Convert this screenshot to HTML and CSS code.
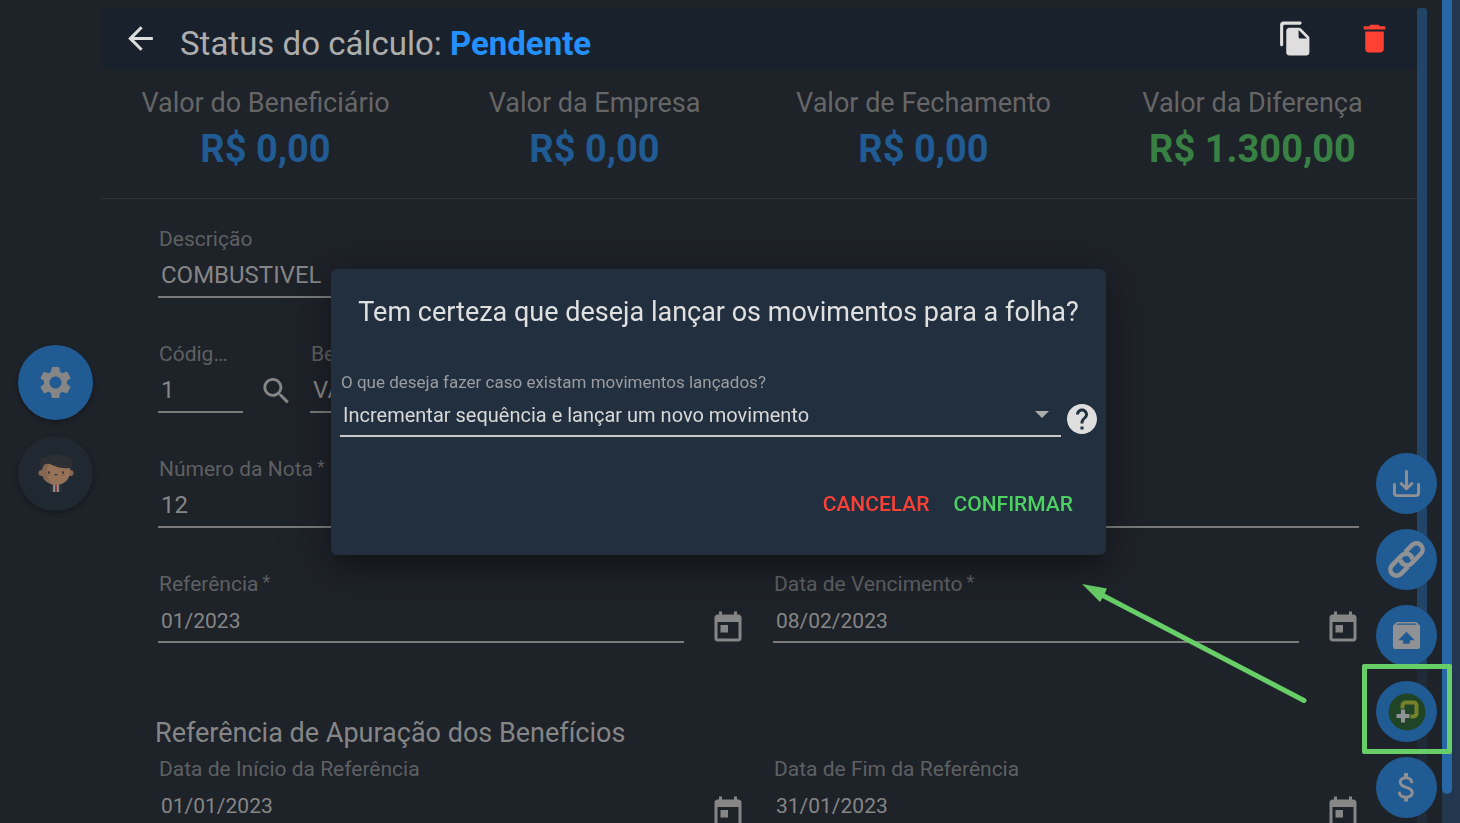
FILE: index.html
```html
<!DOCTYPE html>
<html lang="pt-BR">
<head>
<meta charset="utf-8">
<title>Status do cálculo</title>
<link rel="stylesheet" href="styles.css">
</head>
<body>
<svg class="defs" aria-hidden="true">
  <symbol id="calendar" viewBox="0 0 24 24"><path d="M19 3h-1V1h-2v2H8V1H6v2H5c-1.100 0-2 .9-2 2v14c0 1.100.9 2 2 2h14c1.100 0 2-.9 2-2V5c0-1.100-.9-2-2-2zm0 16H5V8h14v11zM7 10h5v5H7z"/></symbol>
</svg>
<div class="app">
  <nav class="side">
    <button class="side-btn side-btn-blue" aria-label="Configurações">
      <svg class="icon-gear" viewBox="0 0 24 24"><path d="M19.430 12.980c.04-.32.07-.64.07-.98s-.03-.66-.07-.98l2.110-1.650c.19-.15.24-.42.12-.64l-2-3.460c-.12-.22-.39-.3-.61-.22l-2.490 1c-.52-.4-1.080-.73-1.690-.98l-.38-2.650C14.460 2.180 14.250 2 14 2h-4c-.25 0-.46.180-.49.420l-.38 2.650c-.61.250-1.170.590-1.690.980l-2.490-1c-.23-.09-.49 0-.61.220l-2 3.460c-.13.220-.07.490.120.640l2.110 1.650c-.04.320-.07.650-.07.980s.030.660.070.980l-2.110 1.650c-.19.150-.24.420-.12.640l2 3.460c.120.220.390.300.610.220l2.490-1c.520.400 1.080.730 1.690.980l.38 2.650c.03.240.24.420.49.420h4c.25 0 .46-.18.49-.42l.38-2.650c.61-.25 1.170-.59 1.690-.98l2.490 1c.23.090.49 0 .61-.22l2-3.460c.12-.22.070-.49-.12-.64l-2.110-1.650zM12 15.900c-2.150 0-3.900-1.750-3.900-3.900s1.750-3.900 3.900-3.900 3.900 1.750 3.900 3.900-1.750 3.900-3.900 3.900z"/></svg>
    </button>
    <button class="side-btn" aria-label="Perfil">
      <svg class="icon-face" viewBox="0 0 36 40">
        <path fill="#2d2f34" d="M2 17V9c0-4 3-5 6-5 3-3 12-4 18-1 6 0 9 3 8 7v8H2z"/>
        <path fill="#8b8b8b" d="M15 29h6v10h-6z"/><path fill="#8a4040" d="M17 31h2v8h-2z"/>
        <path fill="#2a3038" d="M12 33l3-2v8h-3zM24 33l-3-2v8h3z"/>
        <circle cx="3.500" cy="20" r="3" fill="#856650"/><circle cx="32.500" cy="20" r="3" fill="#856650"/>
        <path fill="#957258" d="M5 14c1-3 4-4 7-3 5 2 9 5 20 4v4c0 7-6 13-14 13S4 26 4 19z"/>
        <path fill="#856650" d="M5 14c1-2 3-3 6-3-3 6-3 14 3 20C8 30 4 25 4 19z"/>
        <g fill="#30343a"><ellipse cx="11" cy="19.500" rx=".9" ry="1.500"/><ellipse cx="25" cy="19.500" rx=".9" ry="1.500"/><path d="M16.500 21h3c0 2-3 2-3 0z"/></g>
        <g fill="#936045"><ellipse cx="11" cy="22.500" rx="2" ry=".6"/><ellipse cx="25" cy="22.500" rx="2" ry=".6"/></g>
      </svg>
    </button>
  </nav>

  <main class="panel">
    <header class="bar">
      <button class="bar-btn" aria-label="Voltar"><svg class="icon-back" viewBox="0 0 24 24"><path d="M20 11H7.830l5.590-5.590L12 4l-8 8 8 8 1.410-1.410L7.830 13H20v-2z"/></svg></button>
      <h1 class="bar-title">Status do cálculo: <strong class="status">Pendente</strong></h1>
      <button class="bar-btn" aria-label="Copiar"><svg class="icon-copy" viewBox="0 0 24 24"><path d="M15 1H4c-1.100 0-2 .9-2 2v13c0 .55.45 1 1 1s1-.45 1-1V4c0-.55.45-1 1-1h10c.55 0 1-.45 1-1s-.45-1-1-1zm.590 4.590l4.830 4.830c.37.370.58.880.58 1.410V21c0 1.100-.9 2-2 2H7.990C6.890 23 6 22.100 6 21l.010-14c0-1.100.89-2 1.990-2h6.170c.53 0 1.040.210 1.420.590zM15 12h4.500L14 6.500V11c0 .55.45 1 1 1z"/></svg></button>
      <button class="bar-btn" aria-label="Excluir"><svg class="icon-trash" viewBox="0 0 24 24"><path d="M6 19c0 1.100.9 2 2 2h8c1.100 0 2-.9 2-2V7.500H6V19zM19 4h-3.500l-1-1h-5l-1 1H5v2.200h14V4z"/></svg></button>
    </header>

    <section class="totals">
      <div class="total"><span class="total-name">Valor do Beneficiário</span><strong class="total-value">R$ 0,00</strong></div>
      <div class="total"><span class="total-name">Valor da Empresa</span><strong class="total-value">R$ 0,00</strong></div>
      <div class="total"><span class="total-name">Valor de Fechamento</span><strong class="total-value">R$ 0,00</strong></div>
      <div class="total"><span class="total-name">Valor da Diferença</span><strong class="total-value total-green">R$ 1.300,00</strong></div>
    </section>

    <form class="form">
      <div class="row row-narrow">
        <div class="field"><label for="desc">Descrição</label><input id="desc" class="large" value="COMBUSTIVEL"></div>
      </div>
      <div class="row row-code">
        <div class="field"><label for="cod" class="short">Código do Benefício</label><input id="cod" class="large" value="1"></div>
        <button type="button" class="icon-btn" aria-label="Pesquisar"><svg viewBox="0 0 24 24"><path d="M15.500 14h-.79l-.28-.27C15.410 12.590 16 11.110 16 9.500 16 5.910 13.090 3 9.500 3S3 5.910 3 9.500 5.910 16 9.500 16c1.610 0 3.090-.59 4.230-1.570l.27.280v.79l5 4.990L20.490 19l-4.990-5zm-6 0C7.010 14 5 11.990 5 9.500S7.010 5 9.500 5 14 7.010 14 9.500 11.990 14 9.500 14z"/></svg></button>
        <div class="field"><label for="ben">Benefício</label><input id="ben" class="large" value="VALE COMBUSTIVEL"></div>
      </div>
      <div class="row row-wide">
        <div class="field"><label for="nota">Número da Nota<sup>*</sup></label><input id="nota" class="large" value="12"></div>
      </div>
      <div class="row row-dates">
        <div class="date"><div class="field"><label for="ref">Referência<sup>*</sup></label><input id="ref" value="01/2023"></div>
          <button type="button" class="icon-btn" aria-label="Abrir calendário"><svg><use href="#calendar"/></svg></button></div>
        <div class="date"><div class="field"><label for="venc">Data de Vencimento<sup>*</sup></label><input id="venc" value="08/02/2023"></div>
          <button type="button" class="icon-btn" aria-label="Abrir calendário"><svg><use href="#calendar"/></svg></button></div>
      </div>
      <h2 class="section-title">Referência de Apuração dos Benefícios</h2>
      <div class="row row-dates">
        <div class="date"><div class="field"><label for="ini">Data de Início da Referência</label><input id="ini" value="01/01/2023"></div>
          <button type="button" class="icon-btn" aria-label="Abrir calendário"><svg><use href="#calendar"/></svg></button></div>
        <div class="date"><div class="field"><label for="fim">Data de Fim da Referência</label><input id="fim" value="31/01/2023"></div>
          <button type="button" class="icon-btn" aria-label="Abrir calendário"><svg><use href="#calendar"/></svg></button></div>
      </div>
    </form>
  </main>
  <div class="scroll scroll-inner"><div class="thumb"></div></div>
  <div class="scroll scroll-outer"><div class="thumb"></div></div>
</div>

<div class="fabs">
  <button class="fab" aria-label="Baixar"><svg class="outline" viewBox="0 0 30 30"><path d="M2.500 16v8.500q0 3 3 3h19q3 0 3-3V16M15 2.500V20M9.500 15l5.500 5.500L20.500 15"/></svg></button>
  <button class="fab" aria-label="Vincular"><svg class="icon-link" viewBox="0 0 37 37"><g transform="rotate(-45 18.500 18.500)" fill="none" stroke="currentColor" stroke-width="4.600"><path d="M14.500 24.700H4.500A6.200 6.200 0 0 1 4.500 12.300H18A6.200 6.200 0 0 1 22.500 22.800"/><path d="M22.500 12.300H32.500A6.200 6.200 0 0 1 32.500 24.700H19A6.200 6.200 0 0 1 14.500 14.200"/></g></svg></button>
  <button class="fab" aria-label="Desarquivar"><svg viewBox="0 0 30 30"><path fill-rule="evenodd" d="M5 1h20l4 4v21q0 3-3 3H4q-3 0-3-3V5zM5.500 2.500L4.500 4h21l-1-1.500zM15 11l-8.500 9h5v3.500h7V20h5z"/></svg></button>
  <div class="highlight"><button class="fab" aria-label="Lançar na folha"><svg class="icon-launch" viewBox="0 0 38 38"><circle cx="19" cy="19" r="18.500" fill="#204426"/><rect x="14.500" y="9.500" width="14" height="14" rx="3" fill="none" stroke="#77802b" stroke-width="4"/><path fill="#8f9194" stroke="#204426" stroke-width="1" d="M12.500 16h5v4.500H22v5h-4.500V30h-5v-4.500H8v-5h4.500z"/></svg></button></div>
  <button class="fab" aria-label="Valores"><svg class="outline outline-square" viewBox="0 0 30 30"><path d="M20.500 10.500c0-3.500-2-5.500-6-5.500s-6 2-6 4.500c0 6.500 12.500 4 12.500 10.500 0 3.500-2.500 5-6.500 5s-7-2-7-5.500"/><path d="M14.500 0v5M14.500 25v4.500" stroke-width="4"/></svg></button>
</div>

<svg class="arrow" viewBox="0 0 228 124" aria-hidden="true"><path d="M222 116.500L20 11" fill="none" stroke="#68ce68" stroke-width="5" stroke-linecap="round"/><path d="M0 0l25 4.500-2.500 5.500-4 7.500L17.500 17.500z" fill="#68ce68"/></svg>

<div class="overlay">
  <section class="dialog" role="dialog" aria-modal="true" aria-labelledby="dlg">
    <h2 class="dialog-title" id="dlg">Tem certeza que deseja lançar os movimentos para a folha?</h2>
    <div class="choice">
      <div class="choice-field">
        <label for="acao">O que deseja fazer caso existam movimentos lançados?</label>
        <div class="select-box">
          <select id="acao"><option>Incrementar sequência e lançar um novo movimento</option></select>
          <svg class="caret" viewBox="0 0 14 7"><path d="M0 0h14L7 7z"/></svg>
        </div>
      </div>
      <button class="help" aria-label="Ajuda"><svg viewBox="0 0 24 24"><path d="M12 2C6.480 2 2 6.480 2 12s4.480 10 10 10 10-4.480 10-10S17.520 2 12 2zm1 17h-2v-2h2v2zm2.070-7.750l-.9.920C13.450 12.900 13 13.500 13 15h-2v-.5c0-1.100.45-2.100 1.170-2.830l1.240-1.260c.37-.36.59-.86.59-1.410 0-1.100-.9-2-2-2s-2 .9-2 2H8c0-2.210 1.790-4 4-4s4 1.790 4 4c0 .88-.36 1.680-.93 2.250z"/></svg></button>
    </div>
    <div class="actions">
      <button class="action cancel">CANCELAR</button>
      <button class="action confirm">CONFIRMAR</button>
    </div>
  </section>
</div>
</body>
</html>
```
FILE: styles.css
```css
* { box-sizing: border-box; }
body {
  margin: 0;
  height: 100vh;
  overflow: hidden;
  background: #1e2229;
  color: #868686;
  font-family: Roboto, "Liberation Sans", sans-serif;
}
button {
  display: flex;
  align-items: center;
  justify-content: center;
  padding: 0;
  border: 0;
  background: none;
  font-family: inherit;
  cursor: pointer;
}
svg { display: block; fill: currentColor; }
.defs { position: absolute; width: 0; height: 0; }

.app { display: flex; height: 100vh; }

.side {
  flex: 0 0 101px;
  display: flex;
  flex-direction: column;
  align-items: center;
  justify-content: center;
  gap: 16px;
  padding: 32px 0 0 10px;
}
.side-btn {
  width: 75px;
  height: 75px;
  border-radius: 50%;
  background: #202932;
  color: #868686;
  box-shadow: 0 2px 5px rgba(0, 0, 0, .3);
}
.side-btn-blue { background: #205b93; }
.icon-gear { width: 37px; height: 37px; }
.icon-face { width: 36px; height: 40px; }

.panel {
  flex: 1;
  min-width: 0;
  padding-top: 8px;
  overflow: hidden;
}
.bar {
  display: flex;
  align-items: center;
  height: 61px;
  padding: 0 24px 0 21px;
  background: #19222c;
}
.bar-btn { flex: 0 0 auto; color: #dedede; }
.icon-back { width: 37px; height: 37px; }
.icon-copy { width: 37px; height: 37px; }
.icon-trash { width: 37px; height: 37px; color: #ff4133; }
.bar-title {
  flex: 1;
  margin: 0;
  padding: 11px 0 0 21px;
  color: #adadad;
  font-size: 33px;
  line-height: 40px;
  font-weight: 400;
}
.status { color: #2490ff; font-weight: 700; }
.bar-btn + .bar-btn { margin-left: 42px; }

.totals {
  display: grid;
  grid-template-columns: repeat(4, 1fr);
  height: 130px;
  padding-top: 16px;
  border-bottom: 1px solid #303235;
}
.total { display: flex; flex-direction: column; align-items: center; }
.total-name { color: #666; font-size: 27px; line-height: 36px; }
.total-value { color: #205b93; font-size: 38px; line-height: 56px; }
.total-green { color: #388043; }

.form { padding: 28px 56px 0 57px; }
.row { display: grid; margin-bottom: 44px; }
.row-narrow { width: 50%; }
.row-code { grid-template-columns: 85px 35px 448px; column-gap: 16px; }
.row-wide { margin-right: 2px; }
.row-dates { grid-template-columns: 1fr 1fr; column-gap: 27px; }
.date { display: grid; grid-template-columns: 1fr 36px; column-gap: 26px; }
.field { display: flex; flex-direction: column; min-width: 0; }
.field label {
  padding-left: 1px;
  overflow: hidden;
  color: #5f6062;
  font-size: 21px;
  line-height: 24px;
  white-space: nowrap;
  text-overflow: ellipsis;
}
.field .short { margin-right: 12px; }
.field sup { margin-left: 4px; font-size: 18px; line-height: 0; vertical-align: 3px; }
.field input {
  width: 100%;
  height: 47px;
  padding: 4px 3px 0;
  border: 0;
  border-bottom: 2px solid #7a7a7a;
  background: none;
  color: #868686;
  font: 21px Roboto, "Liberation Sans", sans-serif;
  outline: 0;
}
.field input.large { padding-top: 3px; font-size: 24px; }
.icon-btn { align-self: end; margin-bottom: 4px; color: #868686; }
.icon-btn svg { width: 36px; height: 36px; }
.date .icon-btn { margin-bottom: -3px; }
.section-title {
  margin: 72px 0 6px -3px;
  font-size: 27px;
  line-height: 36px;
  font-weight: 400;
}

.scroll { flex: 0 0 auto; }
.scroll-inner { width: 10px; margin: 8px 15px 0 0; background: #212b37; }
.scroll-inner .thumb { height: 81%; border-radius: 4px 4px 0 0; background: #224567; }
.scroll-outer { width: 18px; padding-bottom: 29px; background: #22374d; }
.scroll-outer .thumb { width: 10px; height: 100%; border-radius: 0 0 5px 5px; background: #2767a6; }

.fabs {
  position: fixed;
  right: 8px;
  bottom: 5px;
  display: flex;
  flex-direction: column;
  align-items: center;
  gap: 15px;
}
.fab {
  width: 61px;
  height: 61px;
  border-radius: 50%;
  background: #205b93;
  color: #8f9194;
}
.fab svg { width: 29px; height: 29px; }
.fab .icon-link { width: 37px; height: 37px; overflow: visible; }
.fab .icon-launch { width: 38px; height: 38px; }
.fab .outline {
  fill: none;
  stroke: currentColor;
  stroke-width: 3px;
  stroke-linecap: round;
  stroke-linejoin: round;
}
.fab .outline-square { stroke-linecap: butt; }
.highlight {
  display: flex;
  margin: -17px 0 -12px;
  padding: 12px 10px 7px 9px;
  border: 5px solid #68ce68;
  border-radius: 2px;
}
.fabs > .fab { margin-right: 15px; align-self: flex-end; }

.arrow { position: fixed; left: 1082px; top: 584px; width: 228px; height: 124px; }

.overlay {
  position: fixed;
  inset: 0;
  display: flex;
  align-items: center;
  justify-content: center;
  padding-right: 23px;
}
.dialog {
  width: 775px;
  padding: 24px 9px 31px;
  border-radius: 6px;
  background: #212f3f;
  box-shadow: 0 14px 20px -5px rgba(0, 0, 0, .3), 0 8px 48px 8px rgba(0, 0, 0, .2);
}
.dialog-title {
  margin: 0 0 39px;
  color: #e0e0e0;
  font-size: 27px;
  line-height: 38px;
  font-weight: 400;
  text-align: center;
}
.choice { display: flex; align-items: flex-end; gap: 3px; margin-right: -3px; }
.choice-field { flex: 1; }
.choice-field label { display: block; padding-left: 1px; color: #9b9da0; font-size: 17px; line-height: 24px; }
.select-box { display: flex; align-items: center; height: 43px; border-bottom: 2px solid #c8c8c8; }
.select-box select {
  flex: 1;
  height: 40px;
  padding: 2px 3px 0;
  appearance: none;
  border: 0;
  background: none;
  color: #d8d8d8;
  font: 20px Roboto, "Liberation Sans", sans-serif;
}
.caret { width: 14px; height: 7px; margin-right: 12px; color: #adadad; }
.help { color: #dedede; }
.help svg { width: 36px; height: 36px; }
.actions { display: flex; justify-content: flex-end; gap: 24px; margin-top: 47px; padding-right: 24px; }
.action { height: 40px; font-size: 21px; font-weight: 500; }
.cancel { color: #fb4136; }
.confirm { color: #4dd162; }
```
